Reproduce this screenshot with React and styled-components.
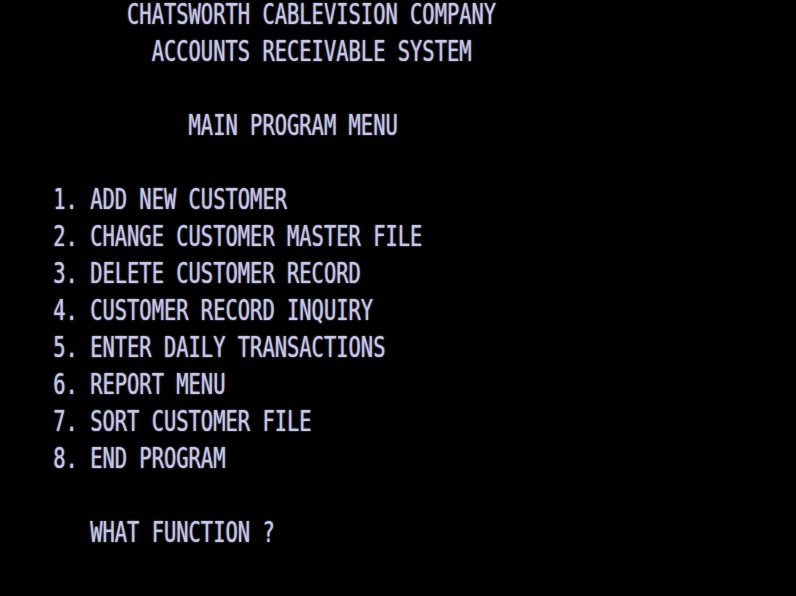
import React from "react";
import styled, { createGlobalStyle } from "styled-components";

const Global = createGlobalStyle`
  html, body { margin: 0; padding: 0; background: #000; }
  body { overflow: hidden; }
`;

const Screen = styled.div`
  width: 796px;
  height: 596px;
  background: #000;
  box-sizing: border-box;
  padding: 0 0 0 4px;
  display: flex;
  flex-direction: column;
  font-family: "DejaVu Sans Mono", "Liberation Mono", monospace;
  font-size: 20.45px;
  color: #c6c6e6;
  text-shadow: 0 0 1.5px rgba(200, 200, 240, 0.8);
`;

const Line = styled.div`
  height: 37px;
  line-height: 29px;
  white-space: pre;
  transform: scaleY(1.36);
  transform-origin: 0 ${(p) => p.$origin}px;
`;

const lines = [
  "          CHATSWORTH CABLEVISION COMPANY",
  "            ACCOUNTS RECEIVABLE SYSTEM",
  "",
  "               MAIN PROGRAM MENU",
  "",
  "    1. ADD NEW CUSTOMER",
  "    2. CHANGE CUSTOMER MASTER FILE",
  "    3. DELETE CUSTOMER RECORD",
  "    4. CUSTOMER RECORD INQUIRY",
  "    5. ENTER DAILY TRANSACTIONS",
  "    6. REPORT MENU",
  "    7. SORT CUSTOMER FILE",
  "    8. END PROGRAM",
  "",
  "       WHAT FUNCTION ?",
];

export default function App() {
  return (
    <>
      <Global />
      <Screen>
        {lines.map((t, i) => (
          <Line key={i} $origin={14}>
            {t || " "}
          </Line>
        ))}
      </Screen>
    </>
  );
}
